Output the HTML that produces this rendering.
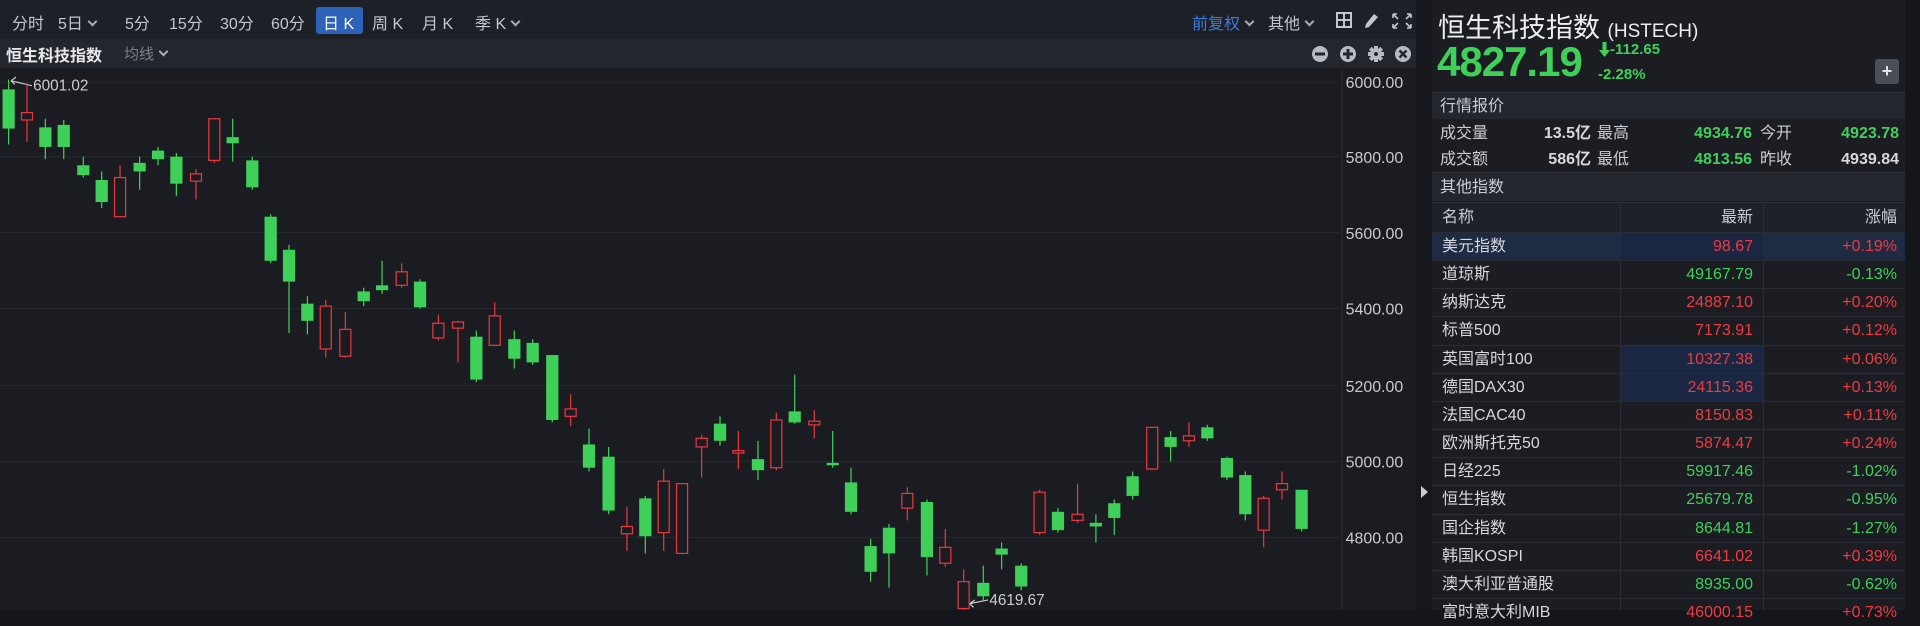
<!DOCTYPE html>
<html><head><meta charset="utf-8"><style>
*{margin:0;padding:0;box-sizing:border-box}
body{width:1920px;height:610px;background:#14161b;overflow:hidden;position:relative;font-family:"Liberation Sans","Noto Sans CJK SC",sans-serif;color:#c9ccd3}
.a{position:absolute;white-space:nowrap}
#tb{left:0;top:0;width:1416px;height:39px;background:#1d2027}
#tb2{left:0;top:39px;width:1416px;height:29px;background:#23262d}
#chart{left:0;top:68px;width:1416px;height:542px;background:#1a1c21}
.t{font-size:16px;color:#c4c7ce;top:10px}
.dd::after{content:"";display:inline-block;margin-left:6px;width:5px;height:5px;border-right:2px solid #aab;border-bottom:2px solid #aab;transform:translateY(-4px) rotate(45deg)}
#rp{left:1432px;top:0;width:473px;height:610px;background:#1b1d22}
.hd{background:#23262d;left:0;width:473px;font-size:16px;color:#c9ccd3;padding-left:8px}
.r{left:0;width:473px;height:28px;border-top:1px solid #2a2d34;font-size:16px}
.r span{position:absolute;top:0;line-height:27px;height:27px}
.g{color:#3fd05a}.rd{color:#ee3b41}.w{color:#d6d8dd}
</style></head><body>
<div class="a" id="tb"></div>
<div class="a" id="tb2"></div>
<div class="a" id="chart"></div>
<div class="a t" style="left:12px">分时</div>
<div class="a t dd" style="left:58px">5日</div>
<div class="a t" style="left:125px">5分</div>
<div class="a t" style="left:169px">15分</div>
<div class="a t" style="left:220px">30分</div>
<div class="a t" style="left:271px">60分</div>
<div class="a" style="left:316px;top:7px;width:47px;height:27px;background:#2d62b8;border-radius:3px"></div>
<div class="a t" style="left:323px;color:#fff">日 K</div>
<div class="a t" style="left:372px">周 K</div>
<div class="a t" style="left:422px">月 K</div>
<div class="a t dd" style="left:475px">季 K</div>
<div class="a t dd" style="left:1192px;color:#3b7be0">前复权</div>
<div class="a t dd" style="left:1268px">其他</div>
<svg class="a" style="left:1336px;top:12px" width="80" height="18" viewBox="0 0 80 18">
<rect x="1" y="1" width="14" height="14" fill="none" stroke="#c4c7ce" stroke-width="2"/><line x1="8" y1="1" x2="8" y2="15" stroke="#c4c7ce" stroke-width="2"/><line x1="1" y1="8" x2="15" y2="8" stroke="#c4c7ce" stroke-width="2"/>
<path d="M38 2 L42 5 L33 15 L29 16 L30 12 Z" fill="#c4c7ce"/>
<path d="M57 2h4M57 2v4M75 2h-4M75 2v4M57 16h4M57 16v-4M75 16h-4M75 16v-4M58 3l4 4M74 3l-4 4M58 15l4-4M74 15l-4-4" stroke="#c4c7ce" stroke-width="1.6" fill="none"/>
</svg>
<div class="a" style="left:6px;top:42px;font-size:16px;font-weight:bold;color:#e6e8ec">恒生科技指数</div>
<div class="a dd" style="left:124px;top:43px;font-size:15px;color:#7d818a">均线</div>
<svg class="a" style="left:1312px;top:45px" width="100" height="18" viewBox="0 0 100 18">
<circle cx="8" cy="9" r="8" fill="#b8bbc2"/><rect x="3" y="7.5" width="10" height="3" fill="#23262d"/>
<circle cx="36" cy="9" r="8" fill="#b8bbc2"/><rect x="31" y="7.5" width="10" height="3" fill="#23262d"/><rect x="34.5" y="4" width="3" height="10" fill="#23262d"/>
<g transform="translate(64 9)" fill="#b8bbc2"><circle r="5.5"/><rect x="-2" y="-8" width="4" height="16"/><rect x="-2" y="-8" width="4" height="16" transform="rotate(45)"/><rect x="-2" y="-8" width="4" height="16" transform="rotate(90)"/><rect x="-2" y="-8" width="4" height="16" transform="rotate(135)"/><circle r="2" fill="#23262d"/></g>
<circle cx="91" cy="9" r="8" fill="#b8bbc2"/><path d="M87.5 5.5l7 7M94.5 5.5l-7 7" stroke="#23262d" stroke-width="2.5"/>
</svg>
<svg class="a" style="left:0;top:0" width="1920" height="610" viewBox="0 0 1568 498.2">
<g stroke="#262930" stroke-width="0.8">
<line x1="0" y1="67" x2="1094" y2="67"/><line x1="0" y1="128" x2="1094" y2="128"/><line x1="0" y1="190" x2="1094" y2="190"/><line x1="0" y1="252" x2="1094" y2="252"/><line x1="0" y1="315" x2="1094" y2="315"/><line x1="0" y1="377" x2="1094" y2="377"/><line x1="0" y1="439" x2="1094" y2="439"/>
</g>
<line x1="1096" y1="56" x2="1096" y2="498" stroke="#2c2f36" stroke-width="0.8"/>
<g font-family="Liberation Sans" font-size="13" fill="#c9ccd3">
<text x="1099" y="72">6000.00</text><text x="1099" y="133">5800.00</text><text x="1099" y="195">5600.00</text><text x="1099" y="257">5400.00</text><text x="1099" y="320">5200.00</text><text x="1099" y="382">5000.00</text><text x="1099" y="444">4800.00</text>
<text x="27" y="74" font-size="12.5">6001.02</text><text x="808" y="494" font-size="12.5">4619.67</text>
</g>
<path d="M26 70 L9 66 M9 66 l4 -3 M9 66 l3 3" stroke="#c9ccd3" stroke-width="1" fill="none"/>
<path d="M807 490 L792 493 M792 493 l4 -3 M792 493 l3 3" stroke="#c9ccd3" stroke-width="1" fill="none"/>
<g id="c"></g>
</svg>
<div class="a" style="left:1416px;top:0;width:16px;height:610px;background:#15171c"></div>
<svg class="a" style="left:1418px;top:484px" width="12" height="16"><path d="M3 2 L10 8 L3 14Z" fill="#c9ccd3"/></svg>

<div class="a" id="rp">
<div class="a" style="left:6px;top:6px;font-size:27px;color:#eceef2">恒生科技指数 <span style="font-size:19px">(HSTECH)</span></div>
<div class="a g" style="left:5px;top:38px;font-size:42px;font-weight:bold;letter-spacing:-1px">4827.19</div>
<svg class="a" style="left:167px;top:42px" width="11" height="15"><path d="M3.5 0h4v8h3.5L5.5 15 0 8h3.5z" fill="#3fd05a"/></svg>
<div class="a g" style="left:178px;top:41px;font-size:15px;font-weight:bold">-112.65</div>
<div class="a g" style="left:166px;top:66px;font-size:15px;font-weight:bold">-2.28%</div>
<div class="a" style="left:443px;top:59px;width:24px;height:25px;background:#4a4e57;border-radius:3px;color:#e0e2e6;font-size:18px;text-align:center;line-height:24px;font-weight:bold">+</div>
<div class="a hd" style="top:92px;height:27px;line-height:27px;border-top:1px solid #2d3037">行情报价</div>
<div class="a" style="left:8px;top:121px;font-size:16px;line-height:26px;width:465px">
<span class="a" style="left:0">成交量</span><span class="a w" style="right:314px;font-weight:bold">13.5亿</span><span class="a" style="left:157px">最高</span><span class="a g" style="right:153px;font-weight:bold">4934.76</span><span class="a" style="left:320px">今开</span><span class="a g" style="right:6px;font-weight:bold">4923.78</span>
<span class="a" style="left:0;top:26px">成交额</span><span class="a w" style="right:314px;top:26px;font-weight:bold">586亿</span><span class="a" style="left:157px;top:26px">最低</span><span class="a g" style="right:153px;top:26px;font-weight:bold">4813.56</span><span class="a" style="left:320px;top:26px">昨收</span><span class="a w" style="right:6px;top:26px;font-weight:bold">4939.84</span>
</div>
<div class="a hd" style="top:172px;height:29px;line-height:29px;border-top:1px solid #2d3037">其他指数</div>
<div class="a" style="left:0;top:202px;width:473px;height:30px;background:#1f2128;border-top:1px solid #2d3037"></div>
<div class="a" style="left:188px;top:202px;width:1px;height:408px;background:#2a2d34"></div>
<div class="a" style="left:331px;top:202px;width:1px;height:408px;background:#2a2d34"></div>
<div class="a" style="left:10px;top:204px;font-size:16px;line-height:28px">名称</div>
<div class="a" style="right:152px;top:204px;font-size:16px;line-height:28px">最新</div>
<div class="a" style="right:8px;top:204px;font-size:16px;line-height:28px">涨幅</div>
<div id="rows"></div>
</div>
<script>
var d=[["美元指数","98.67","+0.19%"],["道琼斯","49167.79","-0.13%"],["纳斯达克","24887.10","+0.20%"],["标普500","7173.91","+0.12%"],["英国富时100","10327.38","+0.06%"],["德国DAX30","24115.36","+0.13%"],["法国CAC40","8150.83","+0.11%"],["欧洲斯托克50","5874.47","+0.24%"],["日经225","59917.46","-1.02%"],["恒生指数","25679.78","-0.95%"],["国企指数","8644.81","-1.27%"],["韩国KOSPI","6641.02","+0.39%"],["澳大利亚普通股","8935.00","-0.62%"],["富时意大利MIB","46000.15","+0.73%"]];
var h="";d.forEach(function(r,i){var t=232+i*28.16,c=r[2][0]=="+"?"rd":"g";
var bg=i==0?"background:#1e2b42;":"";
h+='<div class="a r" style="top:'+t+'px;'+bg+'">'+((i==0||i==4||i==5)?'<div class="a" style="left:189px;top:0;width:142px;height:28px;background:#1a2642"></div>':'')+'<span style="left:10px;color:#d6d8dd">'+r[0]+'</span><span class="'+c+'" style="right:152px">'+r[1]+'</span><span class="'+c+'" style="right:8px">'+r[2]+'</span></div>';});
document.getElementById("rows").innerHTML=h;
var C=[[7,'g',73,105,65,118],[22,'h',92,98,68,116],[37,'g',104,120,97,130],[52,'g',102,120,98,130],[68,'g',135,143,128,145],[83,'g',147,165,140,170],[98,'h',145,177,135,177],[114,'g',133,140,128,155],[129,'g',123,130,120,135],[144,'g',128,150,125,160],[160,'h',142,148,138,163],[175,'h',97,131,97,133],[190,'g',112,117,97,132],[206,'g',131,153,128,155],[221,'g',177,213,175,215],[236,'g',204,230,200,272],[251,'g',248,262,242,273],[266,'h',250,285,245,292],[282,'h',269,291,255,292],[297,'g',238,246,235,250],[312,'g',233,237,213,240],[328,'h',222,233,215,235],[343,'g',230,251,228,252],[358,'h',264,276,257,278],[374,'h',263,268,262,296],[389,'g',275,310,270,312],[404,'h',258,282,247,282],[420,'g',277,293,270,301],[435,'g',280,296,277,298],[451,'g',290,343,290,345],[466,'h',334,340,322,348],[481,'g',363,382,350,385],[497,'g',373,417,365,420],[512,'h',430,436,414,450],[527,'g',407,438,405,452],[542,'h',393,435,383,450],[557,'h',395,452,395,452],[573,'h',358,365,355,390],[588,'g',346,360,340,364],[603,'h',368,370,352,383],[619,'g',375,384,360,392],[634,'h',343,382,337,384],[649,'g',336,345,306,346],[665,'h',344,347,335,358],[680,'g',378,380,352,382],[695,'g',394,418,382,420],[711,'g',446,467,440,475],[726,'g',431,452,428,480],[741,'h',403,415,398,425],[757,'g',410,455,408,470],[772,'h',447,460,432,463],[787,'h',475,497,465,498],[803,'g',476,487,462,490],[818,'g',448,453,443,465],[834,'g',462,479,460,482],[849,'h',402,435,400,437],[864,'g',418,433,415,435],[880,'h',420,425,395,427],[895,'g',427,430,420,443],[910,'g',411,423,408,437],[925,'g',389,405,385,408],[941,'h',349,383,349,384],[956,'g',357,365,352,377],[971,'h',356,360,345,365],[986,'g',349,358,347,360],[1002,'g',374,390,373,392],[1017,'g',388,420,385,425],[1032,'h',407,433,405,447],[1047,'h',395,400,385,408],[1063,'g',400,432,400,434]];
var s="";C.forEach(function(c){var x=c[0],g=c[1]=='g',col=g?'#3fd05a':'#e8383d';
s+='<line x1="'+x+'" y1="'+c[4]+'" x2="'+x+'" y2="'+c[5]+'" stroke="'+col+'" stroke-width="1"/>';
var hgt=Math.max(c[3]-c[2],2);
s+=g?'<rect x="'+(x-5)+'" y="'+c[2]+'" width="10" height="'+hgt+'" fill="'+col+'"/>':'<rect x="'+(x-4.5)+'" y="'+c[2]+'" width="9" height="'+hgt+'" fill="#1a1c21" stroke="'+col+'" stroke-width="1"/>';});
document.getElementById("c").innerHTML=s;
</script>
</body></html>
